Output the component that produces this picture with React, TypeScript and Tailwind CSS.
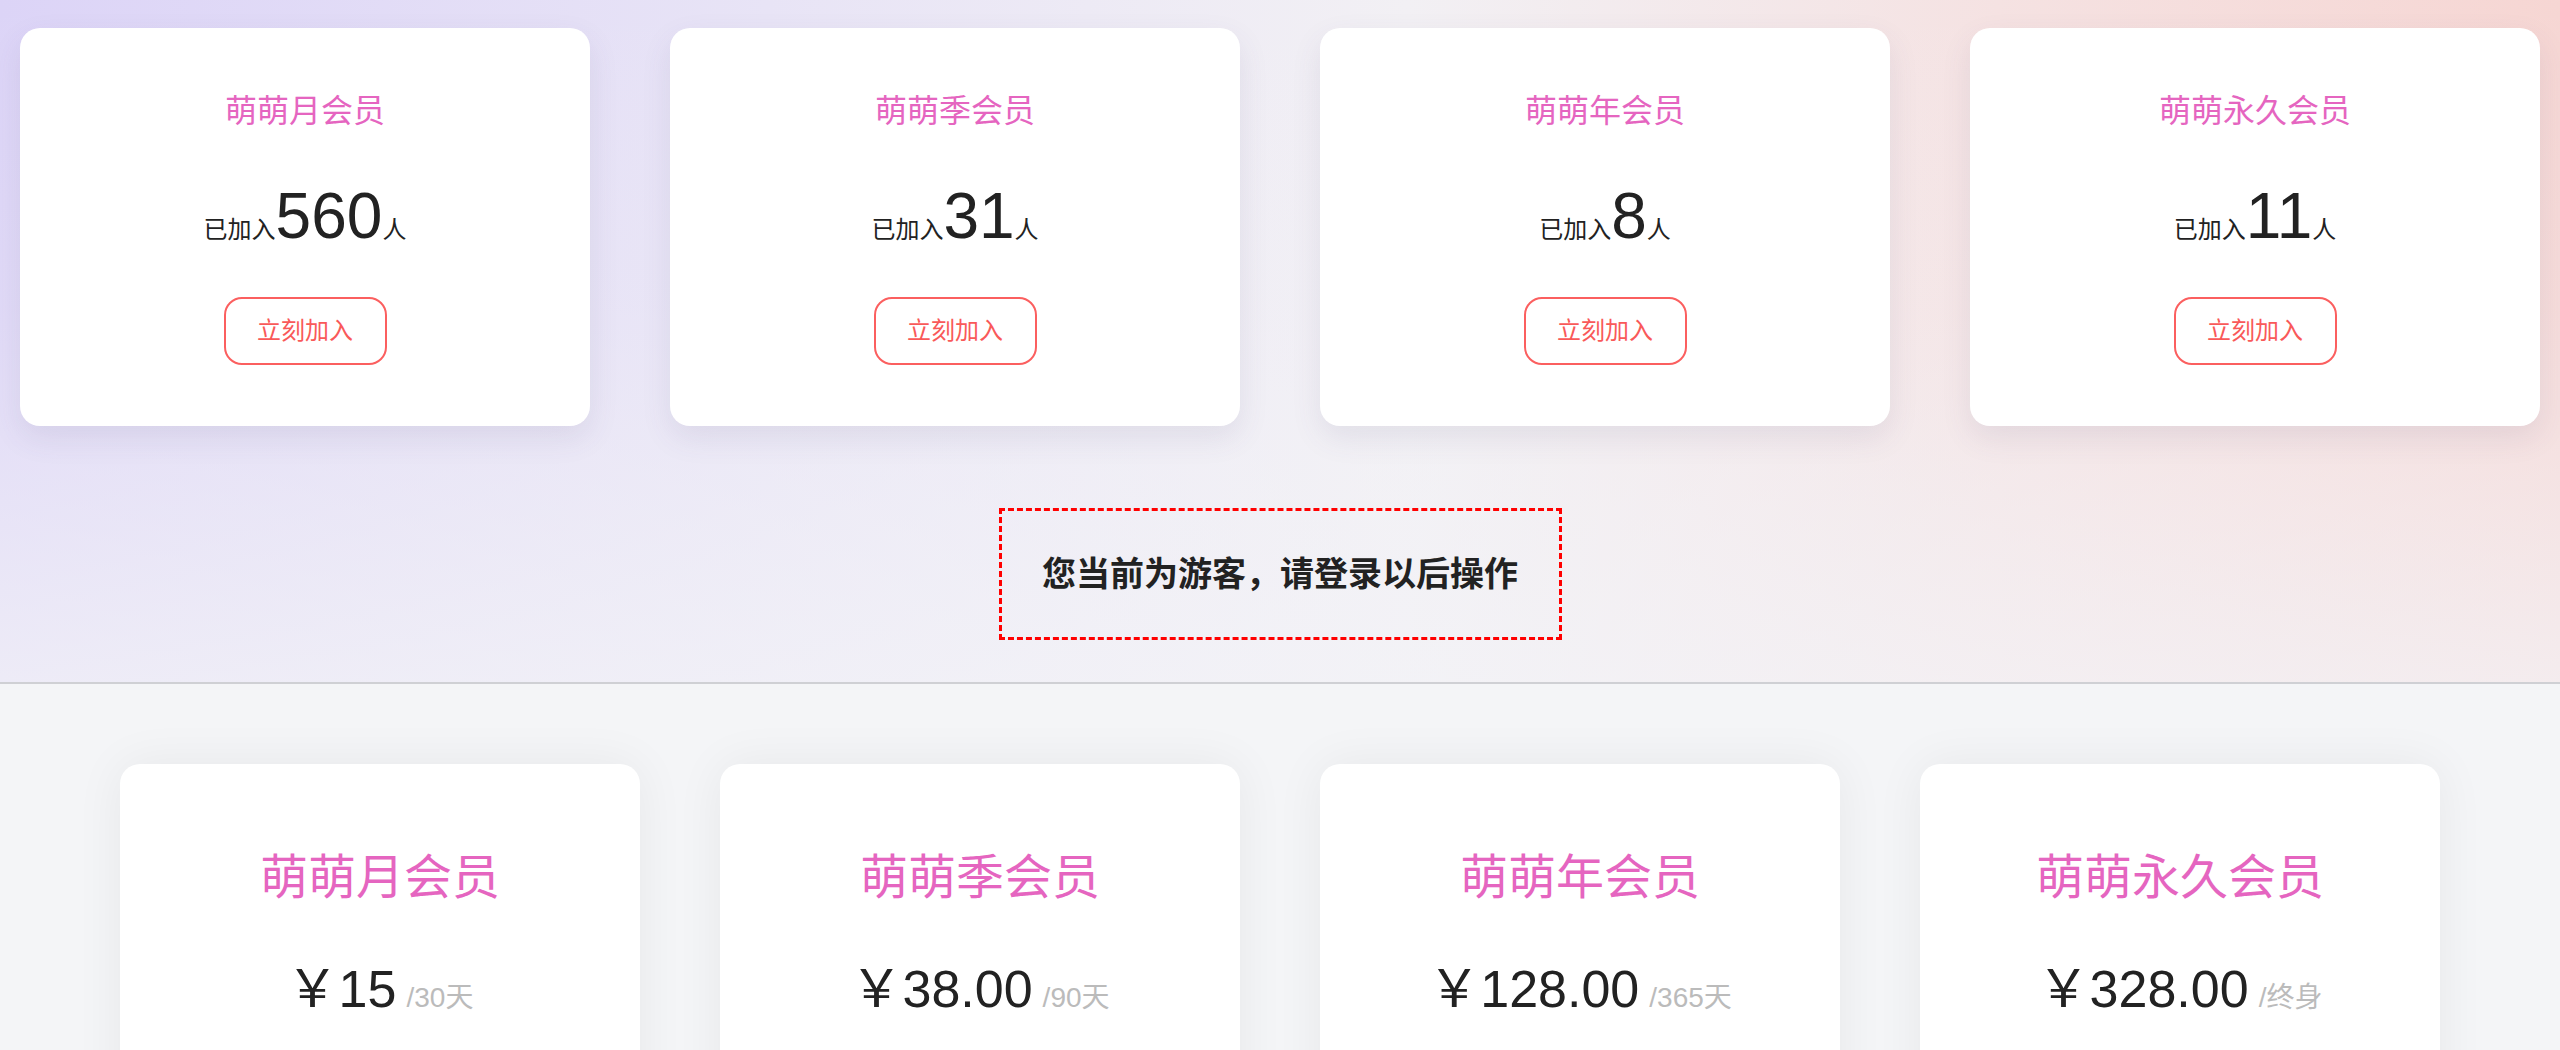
import React from 'react'

const tiers = [
  { name: '萌萌月会员', joined: '560' },
  { name: '萌萌季会员', joined: '31' },
  { name: '萌萌年会员', joined: '8' },
  { name: '萌萌永久会员', joined: '11' },
]

const plans = [
  { name: '萌萌月会员', price: '15', unit: '/30天' },
  { name: '萌萌季会员', price: '38.00', unit: '/90天' },
  { name: '萌萌年会员', price: '128.00', unit: '/365天' },
  { name: '萌萌永久会员', price: '328.00', unit: '/终身' },
]

function TierCard({ name, joined }: { name: string; joined: string }) {
  return (
    <div className="h-[398px] bg-white rounded-[20px] shadow-[0_12px_30px_rgba(80,70,120,0.10)] flex flex-col items-center pt-[59px]">
      <div className="text-[32px] leading-[48px] text-[#e565c0]">{name}</div>
      <div className="mt-[51px] h-[60px] text-[24px] leading-[60px] text-[#222] whitespace-nowrap">
        已加入<span className="text-[64px]">{joined}</span>人
      </div>
      <button className="mt-[51px] w-[163px] h-[68px] rounded-[18px] border-2 border-[#fb5f5f] bg-white text-[24px] text-[#f95959] flex items-center justify-center">
        立刻加入
      </button>
    </div>
  )
}

function PlanCard({ name, price, unit }: { name: string; price: string; unit: string }) {
  return (
    <div className="h-[520px] bg-white rounded-[20px] shadow-[0_0_50px_rgba(0,0,0,0.06)] flex flex-col items-center pt-[82px]">
      <div className="text-[48px] leading-[64px] text-[#e565c0]">{name}</div>
      <div className="mt-[49px] leading-[60px] text-[#222] flex items-baseline">
        <span className="text-[52px]">￥{price}</span>
        <span className="ml-[10px] text-[28px] text-[#bbbbbb]">{unit}</span>
      </div>
    </div>
  )
}

export default function App() {
  return (
    <div
      className="min-h-screen bg-[#f4f5f7]"
      style={{ fontFamily: '"Liberation Sans", "Noto Sans CJK SC", sans-serif' }}
    >
      <section className="bg-[linear-gradient(to_bottom,rgba(243,243,247,0)_0%,rgba(243,243,247,0.2)_45%,rgba(243,243,247,0.75)_100%),linear-gradient(to_right,#dcd4f7_0%,#e8e4f6_30%,#f2f0f4_55%,#f5e2e2_78%,#f6d6d3_100%)] border-b-2 border-[#cfd0d4] pt-[28px] pb-[42px]">
        <div className="grid grid-cols-4 gap-[80px] px-[20px]">
          {tiers.map((t) => (
            <TierCard key={t.name} {...t} />
          ))}
        </div>
        <div className="mt-[82px] flex justify-center">
          <div className="w-[563px] h-[132px] border-[3px] border-dashed border-[#ff0000] flex items-center justify-center">
            <span className="text-[34px] font-bold text-[#222]">您当前为游客，请登录以后操作</span>
          </div>
        </div>
      </section>

      <section className="pt-[80px]">
        <div className="w-[2320px] mx-auto grid grid-cols-4 gap-[80px]">
          {plans.map((p) => (
            <PlanCard key={p.name} {...p} />
          ))}
        </div>
      </section>
    </div>
  )
}
